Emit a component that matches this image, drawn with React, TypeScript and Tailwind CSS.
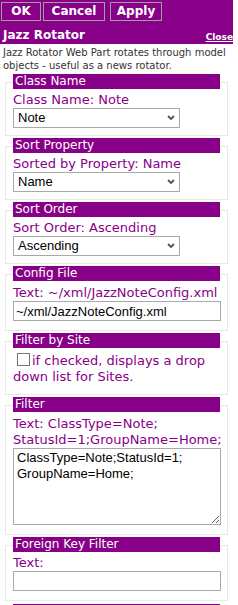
import React from 'react';

const PURPLE = 'bg-[#880088]';
const ARIAL = { fontFamily: '"Liberation Sans", Arial, sans-serif' };

const Chevron: React.FC = () => (
  <svg className="pointer-events-none absolute right-[5px] top-[7px] w-[8px] h-[6px]" viewBox="0 0 8 6">
    <path d="M1 1 L4 4 L7 1" fill="none" stroke="#555" strokeWidth="1.8" />
  </svg>
);

interface SectionProps {
  title: string;
  children?: React.ReactNode;
  className?: string;
  bodyClass?: string;
}

const Section: React.FC<SectionProps> = ({ title, children, className = '', bodyClass = 'pb-[7px]' }) => (
  <div className={`border border-[#e8e8e8] mx-[5px] mt-[10px] ${className}`}>
    <div className={`${PURPLE} -mt-[9px] mx-[7px] h-[15px] text-white text-[12px] leading-[15px] pl-[2px] whitespace-nowrap overflow-hidden`}>
      {title}
    </div>
    <div className={`px-[7px] ${bodyClass}`}>{children}</div>
  </div>
);

const Label: React.FC<{ children: React.ReactNode; className?: string }> = ({ children, className = 'mt-[3px]' }) => (
  <div className={`${className} text-[13px] leading-[16px] text-[#880088]`}>{children}</div>
);

const Dropdown: React.FC<{ value: string }> = ({ value }) => (
  <div className="relative w-[167px] h-[20px]">
    <select
      defaultValue={value}
      className="block appearance-none w-full h-[20px] border border-[#a9a9a9] bg-white pl-[4px] text-[13px] leading-[18px] text-black outline-none"
      style={ARIAL}
    >
      <option>{value}</option>
    </select>
    <Chevron />
  </div>
);

const TextBox: React.FC<{ value?: string }> = ({ value = '' }) => (
  <input
    type="text"
    defaultValue={value}
    className="block w-[208px] h-[20px] border border-[#a9a9a9] bg-white px-[2px] text-[13px] text-black outline-none"
    style={ARIAL}
  />
);

const ToolButton: React.FC<{ label: string; className?: string }> = ({ label, className = '' }) => (
  <button
    className={`h-[19px] border border-[#a0a0a0] ${PURPLE} text-white font-bold text-[12px] leading-[17px] ${className}`}
  >
    {label}
  </button>
);

export default function App() {
  return (
    <div
      className="w-[233px] bg-white overflow-hidden h-[605px]"
      style={{ fontFamily: '"DejaVu Sans", Verdana, sans-serif' }}
    >
      <div className={`${PURPLE} h-[44px] pt-[2px]`}>
        <div className="flex pl-[1px]">
          <ToolButton label="OK" className="w-[40px]" />
          <ToolButton label="Cancel" className="ml-[2px] w-[62px]" />
          <ToolButton label="Apply" className="ml-[5px] w-[52px]" />
        </div>
        <div className="flex items-end justify-between pl-[3px] mt-[6px]">
          <span className="text-white font-bold text-[12px] leading-[16px]">Jazz Rotator</span>
          <a href="#" className="text-white font-bold text-[9px] leading-[12px] underline">
            Close
          </a>
        </div>
      </div>

      <p className="px-[3px] pt-[2px] text-[10px] leading-[13px] text-[#333]">
        Jazz Rotator Web Part rotates through model objects - useful as a news rotator.
      </p>

      <Section title="Class Name">
        <Label>Class Name: Note</Label>
        <Dropdown value="Note" />
      </Section>

      <Section title="Sort Property">
        <Label>Sorted by Property: Name</Label>
        <Dropdown value="Name" />
      </Section>

      <Section title="Sort Order">
        <Label>Sort Order: Ascending</Label>
        <Dropdown value="Ascending" />
      </Section>

      <Section title="Config File" bodyClass="pb-[9px]">
        <Label className="mt-[4px]">Text: ~/xml/JazzNoteConfig.xml</Label>
        <TextBox value="~/xml/JazzNoteConfig.xml" />
      </Section>

      <Section title="Filter by Site" bodyClass="pb-[9px]">
        <label className="block mt-[5px] text-[13px] leading-[16px] text-[#880088]">
          <input
            type="checkbox"
            className="appearance-none align-[-1px] ml-[4px] mr-[2px] w-[13px] h-[13px] border border-[#777] bg-white"
          />
          if checked, displays a drop down list for Sites.
        </label>
      </Section>

      <Section title="Filter" bodyClass="pb-[9px]">
        <Label className="mt-[4px]">Text: ClassType=Note; StatusId=1;GroupName=Home;</Label>
        <textarea
          defaultValue={'ClassType=Note;StatusId=1;\nGroupName=Home;'}
          className="block w-[208px] h-[77px] border border-[#a9a9a9] bg-white px-[3px] py-[1px] text-[13px] leading-[16px] text-black outline-none resize"
          style={ARIAL}
        />
      </Section>

      <Section title="Foreign Key Filter" bodyClass="pb-[9px]">
        <Label>Text:</Label>
        <TextBox />
      </Section>

      <Section title="" className="!mt-[11px]">
        <div className="h-[40px]" />
      </Section>
    </div>
  );
}
